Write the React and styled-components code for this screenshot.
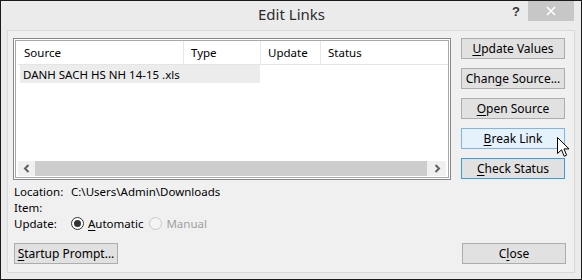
import React from "react";
import styled, { createGlobalStyle } from "styled-components";

const Global = createGlobalStyle`
  html, body { margin: 0; padding: 0; background: #ffffff; }
  body { font-family: "Noto Sans", "Open Sans", sans-serif; font-size: 11.5px; color: #000; }
  * { box-sizing: border-box; }
`;

const Window = styled.div`
  position: relative;
  width: 582px;
  height: 280px;
  border: 1px solid #1a1a1a;
  background: #ebebeb;
  display: flex;
  flex-direction: column;
`;

const TitleBar = styled.div`
  height: 29px;
  display: flex;
  align-items: center;
  justify-content: center;
  position: relative;
`;

const Title = styled.div`
  font-size: 15px;
  color: #2b2b2b;
  margin-top: -3px;
  margin-left: 1px;
`;

const TitleControls = styled.div`
  position: absolute;
  right: 7px;
  top: 0;
  display: flex;
  align-items: flex-start;
  gap: 8px;
`;

const HelpGlyph = styled.span`
  font-family: "Liberation Sans", Arial, sans-serif;
  font-weight: bold;
  font-size: 13px;
  color: #333;
  line-height: 21px;
`;

const CloseBox = styled.div`
  width: 46px;
  height: 20px;
  background: #c7c7c7;
  display: flex;
  align-items: center;
  justify-content: center;
`;

const Client = styled.div`
  flex: 1;
  margin: 0 6px 6px 6px;
  border: 1px solid #d9d9d9;
  background: #f0f0f0;
  padding: 7px 8px 8px 5px;
  display: flex;
  flex-direction: column;
`;

const TopRow = styled.div`
  display: flex;
  gap: 10px;
`;

const ListBox = styled.div`
  width: 438px;
  height: 142px;
  border: 1px solid #828790;
  background: #fff;
  padding: 1px;
  display: flex;
`;

const ListInner = styled.div`
  flex: 1;
  border: 1px solid #a9a9a9;
  display: flex;
  flex-direction: column;
`;

const HeaderRow = styled.div`
  height: 24px;
  display: grid;
  grid-template-columns: 166px 77px 60px 1fr;
  border-bottom: 1px solid #e5e5e5;
  margin-left: 2px;
`;

const HeaderCell = styled.div`
  display: flex;
  align-items: center;
  padding-left: ${(p) => (p.$first ? 6 : 7)}px;
  border-right: ${(p) => (p.$last ? "none" : "1px solid #e3e8f3")};
`;

const DataRow = styled.div`
  height: 18px;
  width: 240px;
  margin-left: 4px;
  background: #ececec;
  display: flex;
  align-items: center;
  padding-left: 3px;
`;

const ListSpacer = styled.div`
  flex: 1;
`;

const HScroll = styled.div`
  height: 15px;
  margin: 0 2px 1px 2px;
  background: #f0f0f0;
  display: flex;
  align-items: stretch;
`;

const ScrollArrow = styled.div`
  width: 17px;
  display: flex;
  align-items: center;
  justify-content: center;
`;

const ScrollThumb = styled.div`
  flex: 1;
  background: #cdcdcd;
  margin-right: 2px;
`;

const ButtonColumn = styled.div`
  display: flex;
  flex-direction: column;
  gap: 9px;
`;

const Button = styled.div`
  width: ${(p) => p.$w || 104}px;
  height: 21px;
  border: 1px solid
    ${(p) => (p.$hover ? "#7eb4ea" : p.$focus ? "#3c9be8" : "#adadad")};
  background: ${(p) => (p.$hover ? "#e5f1fb" : "#e1e1e1")};
  display: flex;
  align-items: center;
  justify-content: center;
  color: #000;
  font-size: 12px;
  line-height: 1;
  u { text-decoration: underline; text-underline-offset: 2px; }
`;

const Info = styled.div`
  margin-top: 3px;
  margin-left: 1px;
  display: grid;
  grid-template-columns: 57px 1fr;
  grid-auto-rows: 16px;
  align-items: center;
  color: #000;
`;

const RadioGroup = styled.div`
  display: flex;
  align-items: center;
`;

const RadioItem = styled.label`
  display: flex;
  align-items: center;
  gap: 4px;
  margin-right: 6px;
  color: ${(p) => (p.$disabled ? "#a0a0a0" : "#000")};
  u { text-decoration: underline; text-underline-offset: 2px; }
`;

const RadioCircle = styled.span`
  width: 13px;
  height: 13px;
  border-radius: 50%;
  border: 1px solid ${(p) => (p.$disabled ? "#c9c9c9" : "#333")};
  background: ${(p) => (p.$disabled ? "#f4f4f4" : "#fff")};
  display: flex;
  align-items: center;
  justify-content: center;
`;

const RadioDot = styled.span`
  width: 7px;
  height: 7px;
  border-radius: 50%;
  background: #333;
`;

const BottomRow = styled.div`
  margin-top: auto;
  margin-left: 1px;
  display: flex;
  justify-content: space-between;
`;

const Cursor = styled.svg`
  position: absolute;
  left: 556px;
  top: 136px;
`;

export default function App() {
  return (
    <>
      <Global />
      <Window>
        <TitleBar>
          <Title>Edit Links</Title>
          <TitleControls>
            <HelpGlyph>?</HelpGlyph>
            <CloseBox>
              <svg width="10" height="10" viewBox="0 0 10 10">
                <path d="M1 1 L9 9 M9 1 L1 9" stroke="#fff" strokeWidth="1.6" />
              </svg>
            </CloseBox>
          </TitleControls>
        </TitleBar>
        <Client>
          <TopRow>
            <ListBox>
              <ListInner>
                <HeaderRow>
                  <HeaderCell $first>Source</HeaderCell>
                  <HeaderCell>Type</HeaderCell>
                  <HeaderCell>Update</HeaderCell>
                  <HeaderCell $last>Status</HeaderCell>
                </HeaderRow>
                <DataRow>DANH SACH HS NH 14-15 .xls</DataRow>
                <ListSpacer />
                <HScroll>
                  <ScrollArrow>
                    <svg width="7" height="9" viewBox="0 0 7 9">
                      <path d="M5.5 1 L2 4.5 L5.5 8" stroke="#606060" strokeWidth="2" fill="none" />
                    </svg>
                  </ScrollArrow>
                  <ScrollThumb />
                  <ScrollArrow>
                    <svg width="7" height="9" viewBox="0 0 7 9">
                      <path d="M1.5 1 L5 4.5 L1.5 8" stroke="#606060" strokeWidth="2" fill="none" />
                    </svg>
                  </ScrollArrow>
                </HScroll>
              </ListInner>
            </ListBox>
            <ButtonColumn>
              <Button><span><u>U</u>pdate Values</span></Button>
              <Button><span>Chan<u>g</u>e Source...</span></Button>
              <Button><span><u>O</u>pen Source</span></Button>
              <Button $hover><span><u>B</u>reak Link</span></Button>
              <Button $focus><span><u>C</u>heck Status</span></Button>
            </ButtonColumn>
          </TopRow>
          <Info>
            <span>Location:</span>
            <span>C:\Users\Admin\Downloads</span>
            <span>Item:</span>
            <span></span>
            <span>Update:</span>
            <RadioGroup>
              <RadioItem>
                <RadioCircle><RadioDot /></RadioCircle>
                <span><u>A</u>utomatic</span>
              </RadioItem>
              <RadioItem $disabled>
                <RadioCircle $disabled />
                <span>Manual</span>
              </RadioItem>
            </RadioGroup>
          </Info>
          <BottomRow>
            <Button $w={104}><span><u>S</u>tartup Prompt...</span></Button>
            <Button><span>C<u>l</u>ose</span></Button>
          </BottomRow>
        </Client>
        <Cursor width="13" height="21" viewBox="0 0 13 21">
          <path
            d="M0.5 0.5 L0.5 16.5 L4.5 12.8 L7.2 19.2 L9.6 18.2 L7 11.9 L12 11.9 Z"
            fill="#fff"
            stroke="#000"
            strokeWidth="1"
            strokeLinejoin="miter"
          />
        </Cursor>
      </Window>
    </>
  );
}
